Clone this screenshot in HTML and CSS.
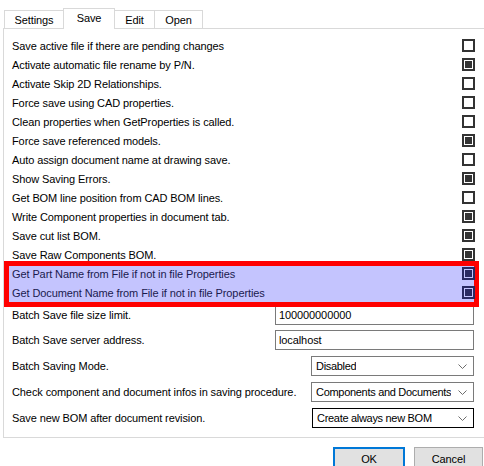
FILE: index.html
```html
<!DOCTYPE html>
<html>
<head>
<meta charset="utf-8">
<link rel="stylesheet" href="styles.css">
</head>
<body>
<div class="window">
  <div class="tabs">
    <div class="tab tab-settings">Settings</div>
    <div class="tab tab-save active">Save</div>
    <div class="tab tab-edit">Edit</div>
    <div class="tab tab-open">Open</div>
  </div>
  <div class="panel">
    <div class="row"><span class="lbl">Save active file if there are pending changes</span><span class="cb"></span></div>
    <div class="row"><span class="lbl">Activate automatic file rename by P/N.</span><span class="cb checked"></span></div>
    <div class="row"><span class="lbl">Activate Skip 2D Relationships.</span><span class="cb"></span></div>
    <div class="row"><span class="lbl">Force save using CAD properties.</span><span class="cb"></span></div>
    <div class="row"><span class="lbl">Clean properties when GetProperties is called.</span><span class="cb"></span></div>
    <div class="row"><span class="lbl">Force save referenced models.</span><span class="cb checked"></span></div>
    <div class="row"><span class="lbl">Auto assign document name at drawing save.</span><span class="cb"></span></div>
    <div class="row"><span class="lbl">Show Saving Errors.</span><span class="cb checked"></span></div>
    <div class="row"><span class="lbl">Get BOM line position from CAD BOM lines.</span><span class="cb"></span></div>
    <div class="row"><span class="lbl">Write Component properties in document tab.</span><span class="cb checked"></span></div>
    <div class="row"><span class="lbl">Save cut list BOM.</span><span class="cb checked"></span></div>
    <div class="row"><span class="lbl">Save Raw Components BOM.</span><span class="cb checked"></span></div>
    <div class="hl">
      <div class="row"><span class="lbl">Get Part Name from File if not in file Properties</span><span class="cb checked"></span></div>
      <div class="row"><span class="lbl">Get Document Name from File if not in file Properties</span><span class="cb checked"></span></div>
    </div>
    <div class="frow"><span class="lbl">Batch Save file size limit.</span><span class="input">100000000000</span></div>
    <div class="frow"><span class="lbl">Batch Save server address.</span><span class="input">localhost</span></div>
    <div class="srow first"><span class="lbl">Batch Saving Mode.</span><span class="select"><span class="val">Disabled</span><svg class="chev" width="9" height="5" viewBox="0 0 9 5"><path d="M0.5 0.5 L4.5 4.5 L8.5 0.5" fill="none" stroke="#6d6d6d" stroke-width="1"/></svg></span></div>
    <div class="srow"><span class="lbl">Check component and document infos in saving procedure.</span><span class="select"><span class="val">Components and Documents</span><svg class="chev" width="9" height="5" viewBox="0 0 9 5"><path d="M0.5 0.5 L4.5 4.5 L8.5 0.5" fill="none" stroke="#6d6d6d" stroke-width="1"/></svg></span></div>
    <div class="srow"><span class="lbl">Save new BOM after document revision.</span><span class="select focused"><span class="val">Create always new BOM</span><svg class="chev" width="9" height="5" viewBox="0 0 9 5"><path d="M0.5 0.5 L4.5 4.5 L8.5 0.5" fill="none" stroke="#6d6d6d" stroke-width="1"/></svg></span></div>
  </div>
  <div class="buttons">
    <div class="btn ok">OK</div>
    <div class="btn cancel">Cancel</div>
  </div>
</div>
</body>
</html>
```

FILE: styles.css
```css
html, body {
  margin: 0;
  padding: 0;
  background: #ffffff;
  overflow: hidden;
}

body {
  font-family: "Liberation Sans", Arial, sans-serif;
  font-size: 11px;
  letter-spacing: -0.1px;
  color: #000;
  white-space: nowrap;
}

.window {
  width: 484px;
  height: 466px;
  overflow: hidden;
}

.tabs {
  display: flex;
  align-items: flex-end;
  height: 20px;
  padding-top: 8px;
  padding-left: 4px;
  position: relative;
  z-index: 1;
}

.tab {
  box-sizing: border-box;
  height: 18px;
  border: 1px solid #d9d9d9;
  border-bottom: none;
  background: #ffffff;
  display: flex;
  align-items: center;
  justify-content: center;
  margin-left: -1px;
  padding-top: 1px;
}

.tab-settings { width: 60px; margin-left: 0; }
.tab-save { width: 52px; }
.tab-edit { width: 41px; }
.tab-open { width: 49px; }

.tab.active {
  height: 21px;
  margin-bottom: -1px;
  position: relative;
  z-index: 2;
  padding-top: 0;
  padding-bottom: 2px;
}

.panel {
  box-sizing: border-box;
  width: 500px;
  margin-left: 3px;
  border: 1px solid #d9d9d9;
  padding: 7px 27px 6px 8px;
  background: #ffffff;
}

.row {
  height: 19px;
  display: flex;
  align-items: center;
  justify-content: space-between;
}

.cb {
  box-sizing: border-box;
  width: 13px;
  height: 13px;
  border: 2px solid #333333;
  padding: 1px;
  display: block;
}

.cb.checked::after {
  content: "";
  display: block;
  width: 7px;
  height: 7px;
  background: #333333;
}

.hl {
  position: relative;
  z-index: 0;
  color: #1a1a4e;
}

.hl::before {
  content: "";
  position: absolute;
  left: -8px;
  right: -4px;
  top: -3px;
  bottom: -5px;
  border: 5px solid #ff0000;
  background: #c4c4fe;
  z-index: -1;
}

.hl .cb {
  border-color: #2a2a62;
}

.hl .cb.checked::after {
  background: #2a2a62;
}

.frow {
  height: 25px;
  display: flex;
  align-items: center;
  justify-content: space-between;
}

.input {
  box-sizing: border-box;
  width: 199px;
  height: 20px;
  border: 1px solid #7a7a7a;
  padding-left: 3px;
  display: flex;
  align-items: center;
  margin-right: 1px;
  background: #fff;
}

.srow {
  height: 26px;
  display: flex;
  align-items: center;
  justify-content: space-between;
}

.srow.first {
  margin-top: 1px;
}

.select {
  box-sizing: border-box;
  width: 163px;
  height: 20px;
  border: 1px solid #7a7a7a;
  padding-left: 4px;
  padding-right: 6px;
  display: flex;
  align-items: center;
  justify-content: space-between;
  margin-right: 1px;
  background: #fff;
}

.select.focused {
  border-color: #000;
  width: 162px;
}

.val {
  overflow: hidden;
  letter-spacing: -0.3px;
}

.chev {
  display: block;
  flex: none;
}

.buttons {
  display: flex;
  justify-content: flex-end;
  gap: 9px;
  margin-top: 9px;
  padding-right: 1px;
}

.btn {
  box-sizing: border-box;
  height: 23px;
  background: #e1e1e1;
  display: flex;
  align-items: center;
  justify-content: center;
}

.btn.ok {
  width: 72px;
  border: 2px solid #0078d7;
}

.btn.cancel {
  width: 69px;
  border: 1px solid #adadad;
}
```
